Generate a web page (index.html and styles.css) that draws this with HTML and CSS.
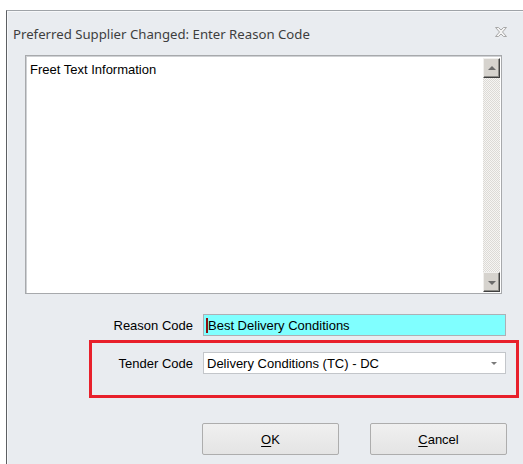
FILE: index.html
```html
<!DOCTYPE html>
<html lang="en">
<head>
<meta charset="utf-8">
<title>Preferred Supplier Changed</title>
<link rel="stylesheet" href="styles.css">
</head>
<body>
  <div class="window">
    <div class="titlebar">
      <span class="title">Preferred Supplier Changed: Enter Reason Code</span>
      <svg class="close" width="12" height="10" viewBox="0 0 12 10" aria-hidden="true">
        <path d="M0.5 0.5 H3.5 L6 3 L8.5 0.5 H11.5 L7.5 5 L11.5 9.5 H8.5 L6 7 L3.5 9.5 H0.5 L4.5 5 Z" fill="#f4f4f4" stroke="#a8a8a8" stroke-width="1" stroke-linejoin="miter"/>
      </svg>
    </div>

    <div class="memo">
      <div class="memo-text">Freet Text Information</div>
      <div class="vscroll">
        <div class="sbtn"><span class="tri tri-up"></span></div>
        <div class="track"></div>
        <div class="sbtn"><span class="tri tri-down"></span></div>
      </div>
    </div>

    <div class="row reason-row">
      <label class="lbl">Reason Code</label>
      <div class="field reason"><span class="caret"></span>Best Delivery Conditions</div>
    </div>

    <div class="highlight">
      <div class="row tender-row">
        <label class="lbl">Tender Code</label>
        <div class="field combo">
          <span class="combo-text">Delivery Conditions (TC) - DC</span>
          <span class="combo-arrow"></span>
        </div>
      </div>
    </div>

    <div class="buttons">
      <button class="btn"><u>O</u>K</button>
      <button class="btn"><u>C</u>ancel</button>
    </div>
  </div>
</body>
</html>
```

FILE: styles.css
```css
html, body {
  margin: 0;
  padding: 0;
}

body {
  width: 523px;
  height: 464px;
  overflow: hidden;
  background: #ffffff;
  font-family: "Liberation Sans", Arial, sans-serif;
  font-size: 13px;
  color: #000;
}

.window {
  margin: 10px 0 0 6px;
  width: 530px;
  height: 460px;
  background: #e9ecf0;
  border-left: 1px solid #5c5f63;
  border-top: 1px solid #9fa3a8;
  box-shadow: inset 1px 1px 0 #f7f8fa;
}

/* caption */
.titlebar {
  height: 44px;
  display: flex;
  align-items: center;
  padding-left: 6px;
  box-sizing: border-box;
  width: 517px;
}

.title {
  font-family: "Noto Sans", "Open Sans", sans-serif;
  font-size: 13.2px;
  color: #3e3e3e;
  margin-top: 1px;
}

.close {
  margin-left: auto;
  margin-right: 17px;
  margin-top: -2px;
}

/* multi-line free text box */
.memo {
  margin-left: 18px;
  width: 477px;
  height: 239px;
  box-sizing: border-box;
  border: 1px solid #a7a9ac;
  box-shadow: inset 1px 1px 0 #cfd1d4;
  background: #ffffff;
  display: flex;
}

.memo-text {
  flex: 1;
  padding: 6px 0 0 4px;
  line-height: 15px;
}

.vscroll {
  width: 17px;
  margin: 2px 1px 1px 0;
  display: flex;
  flex-direction: column;
}

.sbtn {
  height: 20px;
  box-sizing: border-box;
  background: #d6d3ce;
  border-top: 1px solid #f0efed;
  border-left: 1px solid #f0efed;
  border-right: 1px solid #404040;
  border-bottom: 1px solid #404040;
  box-shadow: inset -1px -1px 0 #8e8d89;
  display: flex;
  align-items: center;
  justify-content: center;
}

.track {
  flex: 1;
  background: repeating-conic-gradient(#dcdad6 0 25%, #f6f5f3 0 50%) 0 0 / 2px 2px;
}

.tri {
  width: 0;
  height: 0;
  border-left: 4px solid transparent;
  border-right: 4px solid transparent;
}

.tri-up {
  border-bottom: 4px solid #6b6b6b;
  margin-top: -1px;
}

.tri-down {
  border-top: 4px solid #6b6b6b;
  margin-top: 1px;
}

/* label + field rows */
.row {
  display: flex;
  align-items: center;
}

.lbl {
  text-align: right;
  box-sizing: border-box;
}

.field {
  width: 303px;
  height: 22px;
  box-sizing: border-box;
  border: 1px solid #adb0b5;
  display: flex;
  align-items: center;
}

.reason-row {
  margin-top: 20px;
}

.reason-row .lbl {
  width: 186px;
  margin-right: 10px;
}

.reason {
  background: #80ffff;
  padding-left: 2px;
}

.caret {
  width: 2px;
  height: 15px;
  background: #8b1010;
}

/* red outline round the tender code row */
.highlight {
  margin-top: 4px;
  margin-left: 82px;
  width: 430px;
  height: 58px;
  box-sizing: border-box;
  border: 3px solid #e8202b;
  padding-top: 9px;
}

.tender-row .lbl {
  width: 101px;
  margin-right: 10px;
}

.combo {
  background: #ffffff;
  border-color: #c3c6ca;
  padding-left: 3px;
}

.combo-text {
  flex: 1;
}

.combo-arrow {
  width: 0;
  height: 0;
  border-left: 3px solid transparent;
  border-right: 3px solid transparent;
  border-top: 3px solid #7a7a7a;
  margin-right: 8px;
}

/* dialog buttons */
.buttons {
  display: flex;
  gap: 31px;
  margin-top: 25px;
  margin-left: 195px;
}

.btn {
  width: 137px;
  height: 32px;
  box-sizing: border-box;
  border: 1px solid #adadad;
  border-radius: 2px;
  background: linear-gradient(#f0f0f0, #e4e4e4);
  font-family: "Liberation Sans", Arial, sans-serif;
  font-size: 13px;
  color: #000;
  padding: 0;
}

.btn u {
  text-decoration-thickness: 1px;
  text-underline-offset: 2px;
}
```
